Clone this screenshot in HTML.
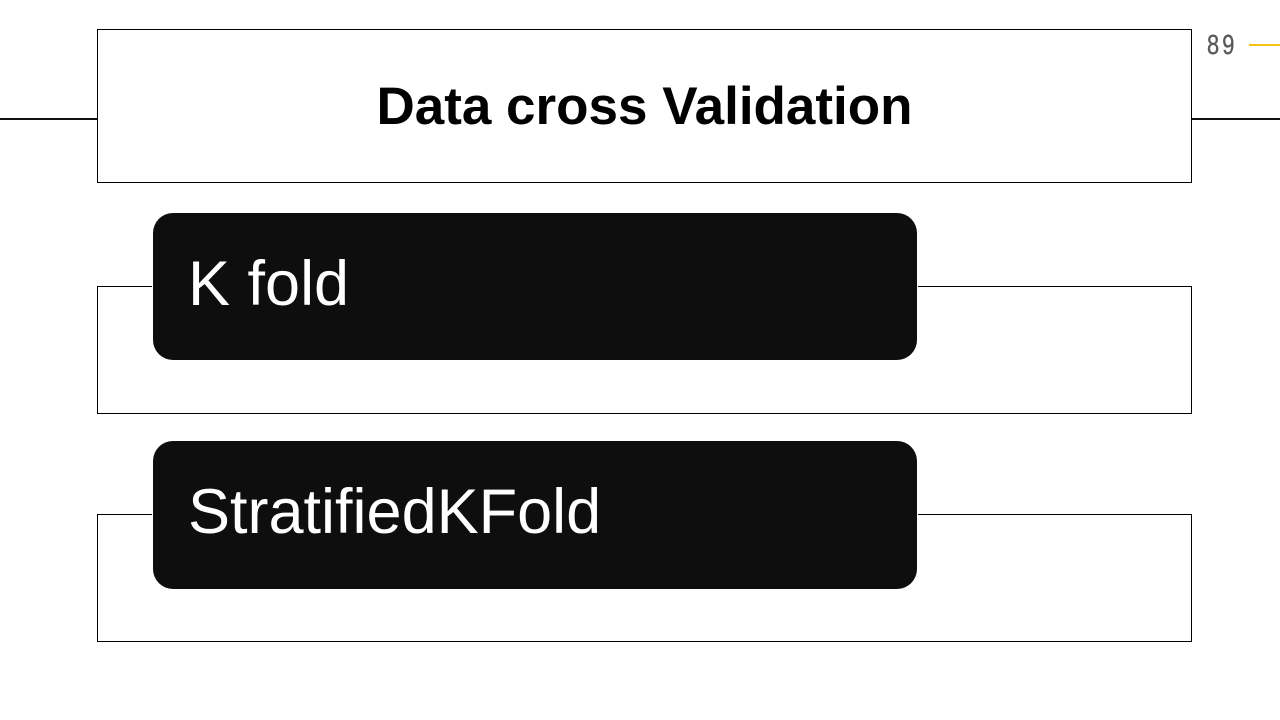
<!DOCTYPE html>
<html><head><style>
body{margin:0;width:1280px;height:720px;background:#fff;position:relative;overflow:hidden;font-family:"Liberation Sans",sans-serif}
.a{position:absolute}
.ob{position:absolute;border:1px solid #000;box-sizing:border-box}
.dk{position:absolute;background:#0e0e0e;border-radius:20px;color:#fff;font-size:63px;box-shadow:0 0 0 1px #fff;box-sizing:border-box;padding-left:35px;line-height:142px}
</style></head><body>
<div class="a" style="left:0;top:118px;width:1280px;height:2px;background:#111"></div>
<div class="ob" style="left:97px;top:29px;width:1095px;height:154px;background:#fff"></div>
<div class="a" style="left:97px;top:76px;width:1095px;text-align:center;font-weight:bold;font-size:53px;line-height:62px">Data cross Validation</div>
<div class="a" style="left:1207px;top:29px;font-family:'Liberation Sans Narrow','Liberation Sans',sans-serif;font-size:28px;color:#595959;letter-spacing:4px;transform:scaleX(0.78);transform-origin:left;-webkit-text-stroke:0.4px #595959">89</div>
<div class="a" style="left:1249px;top:44px;width:31px;height:2px;background:#f5c116"></div>
<div class="ob" style="left:97px;top:286px;width:1095px;height:128px"></div>
<div class="dk" style="left:153px;top:213px;width:764px;height:147px">K fold</div>
<div class="ob" style="left:97px;top:514px;width:1095px;height:128px"></div>
<div class="dk" style="left:153px;top:441px;width:764px;height:148px">StratifiedKFold</div>
</body></html>
